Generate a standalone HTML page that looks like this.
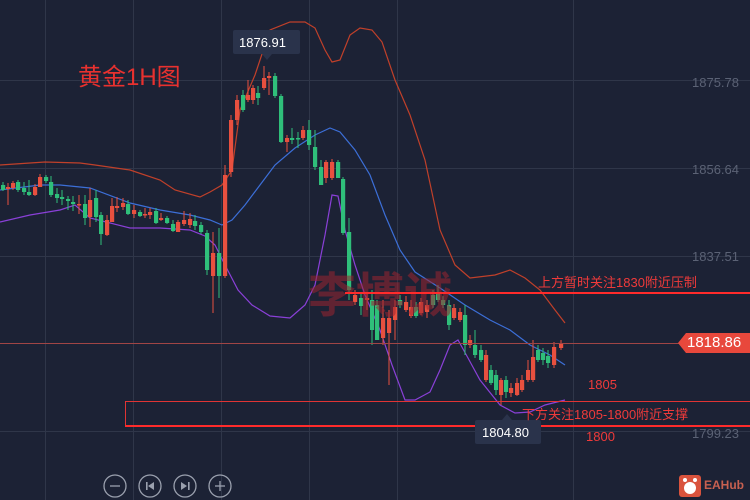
<!DOCTYPE html>
<html><head><meta charset="utf-8"><style>
html,body{margin:0;padding:0;background:#1c2235;}
body{width:750px;height:500px;overflow:hidden;position:relative;font-family:"Liberation Sans","Noto Sans CJK SC",sans-serif;}
svg{position:absolute;left:0;top:0;}
.t{position:absolute;white-space:nowrap;}
</style></head><body>
<svg width="750" height="500" viewBox="0 0 750 500">
<rect width="750" height="500" fill="#1c2235"/>
<g stroke="#2f3649" stroke-width="1">
<line x1="45.5" y1="0" x2="45.5" y2="500"/><line x1="133.5" y1="0" x2="133.5" y2="500"/><line x1="221.5" y1="0" x2="221.5" y2="500"/><line x1="309.5" y1="0" x2="309.5" y2="500"/><line x1="397.5" y1="0" x2="397.5" y2="500"/><line x1="573.5" y1="0" x2="573.5" y2="500"/>
<line x1="0" y1="80.5" x2="750" y2="80.5"/><line x1="0" y1="168.5" x2="750" y2="168.5"/><line x1="0" y1="256.5" x2="750" y2="256.5"/><line x1="0" y1="431.5" x2="750" y2="431.5"/>
</g>
<polyline fill="none" stroke="#c0402a" stroke-width="1.2" points="0,165 45,162 80,163 95,165 130,170 160,180 175,190 200,197 210,192 222,185 232,170 240,110 255,75 270,30 290,22 305,22 315,28 325,50 332,62 340,60 350,35 360,28 372,30 382,42 395,80 410,115 425,160 440,230 455,265 470,278 495,275 510,270 525,278 540,290 555,310 565,323"/>
<polyline fill="none" stroke="#3c6fd8" stroke-width="1.2" points="0,190 40,185 60,185 90,188 130,203 160,210 190,215 210,220 222,225 232,220 245,205 260,185 275,165 295,148 315,135 330,128 340,132 355,150 370,175 385,215 400,250 415,272 440,288 465,305 490,320 510,330 530,345 550,355 565,365"/>
<polyline fill="none" stroke="#8a40d8" stroke-width="1.2" points="0,222 30,215 60,210 75,205 90,218 130,228 160,228 190,230 205,236 215,245 225,265 238,290 252,305 270,316 290,318 305,305 315,285 325,235 332,195 338,196 345,230 355,265 365,295 380,330 392,365 405,400 415,400 430,392 440,370 450,345 458,340 468,358 480,380 500,405 515,413 530,412 545,405 565,400"/>
<g id="c"></g>
<text x="380" y="312" text-anchor="middle" font-size="48" font-weight="bold" fill="#9a2530" fill-opacity="0.55" font-family="Noto Sans CJK SC,sans-serif">李博诚</text>
<line x1="0" y1="343.5" x2="680" y2="343.5" stroke="#a04545" stroke-width="1"/>
<line x1="345" y1="293" x2="750" y2="293" stroke="#ff2b2b" stroke-width="2"/>
<rect x="125.5" y="401.5" width="630" height="25" fill="none" stroke="#e03434" stroke-width="1"/>
<line x1="125" y1="426" x2="750" y2="426" stroke="#ff2b2b" stroke-width="2"/>
<path d="M678 343 L686 333 L750 333 L750 353 L686 353 Z" fill="#e8483c"/>
<rect x="233" y="30" width="67" height="24" rx="2" fill="#2a334b"/>
<path d="M262 54 L267 60 L272 54Z" fill="#2a334b"/>
<rect x="475" y="420" width="66" height="24" rx="2" fill="#2a334b"/>
<path d="M502 420 L507 414 L512 420Z" fill="#2a334b"/>
<g fill="none" stroke="#9aa0ae" stroke-width="1.3">
<circle cx="115" cy="486" r="11"/><circle cx="150" cy="486" r="11"/><circle cx="185" cy="486" r="11"/><circle cx="220" cy="486" r="11"/>
<line x1="110" y1="486" x2="120" y2="486"/><line x1="215" y1="486" x2="225" y2="486"/><line x1="220" y1="481" x2="220" y2="491"/>
</g>
<g fill="#9aa0ae"><rect x="146" y="482" width="1.6" height="8"/><path d="M154 482 L148 486 L154 490Z"/><rect x="188" y="482" width="1.6" height="8"/><path d="M181 482 L187 486 L181 490Z"/></g>
<rect x="679" y="475" width="22" height="22" rx="3" fill="#d9533d"/>
<circle cx="690" cy="488" r="6" fill="#fff"/><circle cx="685" cy="480" r="2" fill="#fff"/><circle cx="695" cy="480" r="2" fill="#fff"/>
</svg>
<div class="t" style="left:78px;top:57px;font-size:24px;color:#e8312f;">黄金1H图</div>
<div class="t" style="left:239px;top:35px;font-size:13px;color:#fff;">1876.91</div>
<div class="t" style="left:482px;top:425px;font-size:13px;color:#fff;">1804.80</div>
<div class="t" style="left:692px;top:75px;font-size:13px;color:#5b6275;">1875.78</div>
<div class="t" style="left:692px;top:162px;font-size:13px;color:#5b6275;">1856.64</div>
<div class="t" style="left:692px;top:249px;font-size:13px;color:#5b6275;">1837.51</div>
<div class="t" style="left:692px;top:426px;font-size:13px;color:#5b6275;">1799.23</div>
<div class="t" style="left:687px;top:334px;font-size:15px;color:#fff;">1818.86</div>
<div class="t" style="left:538px;top:272px;font-size:13px;color:#ef3a3a;">上方暂时关注1830附近压制</div>
<div class="t" style="left:522px;top:404px;font-size:13px;color:#ef3a3a;">下方关注1805-1800附近支撑</div>
<div class="t" style="left:588px;top:377px;font-size:13px;color:#ef3a3a;">1805</div>
<div class="t" style="left:586px;top:429px;font-size:13px;color:#ef3a3a;">1800</div>
<div class="t" style="left:704px;top:478px;font-size:12px;font-weight:bold;color:#c76050;">EAHub</div>
<script>
var d=[[3,'g',185,190,182,191],[8,'r',187,189,183,205],[13,'r',183,188,181,190],[18,'g',182,190,180,192],[24,'g',188,192,182,195],[29,'g',192,195,180,196],[35,'r',187,195,184,196],[40,'r',177,187,174,187],[46,'g',177,181,175,183],[51,'g',182,195,176,197],[57,'g',194,198,188,203],[62,'g',197,199,190,205],[68,'g',199,201,196,210],[73,'g',202,204,196,211],[79,'r',204,205,195,214],[85,'g',204,218,195,225],[90,'r',200,217,188,227],[96,'g',198,217,190,222],[101,'g',215,234,212,245],[107,'r',220,235,215,236],[112,'r',206,222,198,222],[117,'r',206,208,197,212],[123,'r',203,207,198,210],[128,'g',204,214,200,215],[134,'r',210,214,205,218],[140,'g',212,216,210,217],[145,'r',214,215,208,218],[150,'r',212,215,208,219],[156,'g',211,223,208,224],[161,'r',218,220,213,221],[167,'g',218,223,216,224],[173,'g',224,231,220,232],[178,'r',222,232,220,232],[184,'r',220,224,211,226],[190,'r',219,225,213,228],[195,'g',221,226,215,230],[201,'g',225,232,222,234],[207,'g',233,270,230,275],[213,'r',253,276,232,313],[219,'g',253,276,228,298],[225,'r',175,276,165,278],
[231,'r',120,172,115,177],[237,'r',100,120,95,125],[243,'g',95,110,90,112],[248,'r',95,100,80,102],[253,'r',88,100,85,104],[258,'g',93,98,86,105],[264,'r',78,88,66,90],[269,'r',76,78,72,95],[275,'g',76,96,73,98],[281,'g',96,142,94,143],[287,'r',138,142,135,152],[292,'g',138,140,128,144],[298,'g',138,139,132,148],[303,'r',130,138,126,140],[309,'g',130,145,120,150],[315,'g',147,167,130,170],[321,'g',167,185,160,185],[326,'r',162,178,160,183],[332,'r',162,178,159,180],[338,'g',162,178,160,178],[343,'g',179,233,177,235],[349,'g',232,290,218,300],
[355,'r',295,302,290,305],[361,'g',298,306,292,315],[367,'r',298,300,292,310],[372,'g',300,330,290,345],[377,'g',305,340,300,340],[383,'r',318,338,300,345],[389,'r',318,333,310,385],[395,'r',307,320,300,340],[400,'g',300,305,295,308],[406,'r',302,310,296,312],[411,'r',307,316,300,318],[416,'g',307,316,302,318],[421,'r',302,313,298,315],[427,'r',305,312,300,318],[433,'g',295,305,290,308],[438,'g',293,300,285,302],[443,'g',300,305,296,308],[449,'g',305,325,300,330],[454,'r',308,318,304,320],[460,'r',312,320,308,322],[465,'g',315,345,305,355],[470,'r',340,345,335,348],[475,'g',345,355,330,358],[481,'g',350,360,345,362],[486,'r',355,380,350,382],[491,'g',370,383,365,385],[496,'g',375,390,370,395],[501,'r',380,395,378,405],[506,'g',380,392,376,398],[511,'r',388,393,383,397],[517,'r',383,395,378,396],[522,'r',380,390,375,392],[528,'r',370,380,360,382],[533,'r',357,380,340,382],[538,'g',350,360,345,362],[543,'g',353,360,348,365],[548,'g',356,363,350,368],[554,'r',347,365,342,368],[561,'r',343,348,340,350]];
var s='';d.forEach(function(c){var col=c[1]=='r'?'#e8503f':'#2fbf7a';s+='<line x1="'+c[0]+'" y1="'+c[4]+'" x2="'+c[0]+'" y2="'+c[5]+'" stroke="'+col+'" stroke-width="1"/><rect x="'+(c[0]-2)+'" y="'+c[2]+'" width="4.2" height="'+Math.max(1.5,c[3]-c[2])+'" fill="'+col+'"/>';});
document.getElementById('c').innerHTML=s;
</script>
</body></html>
